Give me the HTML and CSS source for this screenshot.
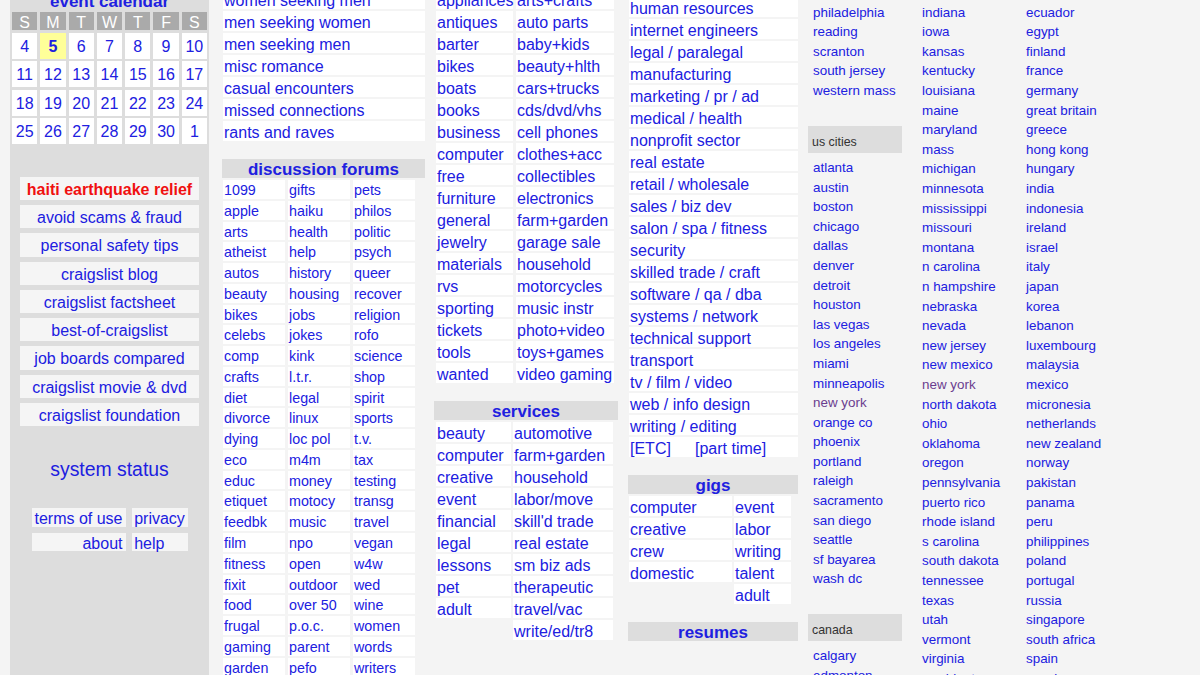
FILE: index.html
```html
<!DOCTYPE html>
<html lang="en">
<head>
<meta charset="utf-8">
<title>craigslist</title>
<link rel="stylesheet" href="styles.css">
</head>
<body>
<div class="page">
  <aside class="sidebar">
    <div class="cal-title"><a href="#">event calendar</a></div>
    <div class="cal-grid">
      <span class="dh">S</span><span class="dh">M</span><span class="dh">T</span><span class="dh">W</span><span class="dh">T</span><span class="dh">F</span><span class="dh">S</span>
      <a class="day" href="#">4</a><a class="day today" href="#">5</a><a class="day" href="#">6</a><a class="day" href="#">7</a><a class="day" href="#">8</a><a class="day" href="#">9</a><a class="day" href="#">10</a>
      <a class="day" href="#">11</a><a class="day" href="#">12</a><a class="day" href="#">13</a><a class="day" href="#">14</a><a class="day" href="#">15</a><a class="day" href="#">16</a><a class="day" href="#">17</a>
      <a class="day" href="#">18</a><a class="day" href="#">19</a><a class="day" href="#">20</a><a class="day" href="#">21</a><a class="day" href="#">22</a><a class="day" href="#">23</a><a class="day" href="#">24</a>
      <a class="day" href="#">25</a><a class="day" href="#">26</a><a class="day" href="#">27</a><a class="day" href="#">28</a><a class="day" href="#">29</a><a class="day" href="#">30</a><a class="day" href="#">1</a>
    </div>
    <ul class="side-links">
      <li><a class="red" href="#">haiti earthquake relief</a></li>
      <li><a href="#">avoid scams &amp; fraud</a></li>
      <li><a href="#">personal safety tips</a></li>
      <li><a href="#">craigslist blog</a></li>
      <li><a href="#">craigslist factsheet</a></li>
      <li><a href="#">best-of-craigslist</a></li>
      <li><a href="#">job boards compared</a></li>
      <li><a href="#">craigslist movie &amp; dvd</a></li>
      <li><a href="#">craigslist foundation</a></li>
    </ul>
    <div class="status"><a href="#">system status</a></div>
    <div class="foot">
      <a class="r" href="#">terms of use</a><a class="l" href="#">privacy</a>
      <a class="r" href="#">about</a><a class="l" href="#">help</a>
    </div>
  </aside>

  <section class="col col-a">
    <ul class="cells cells-a">
      <li><a href="#">women seeking men</a></li>
      <li><a href="#">men seeking women</a></li>
      <li><a href="#">men seeking men</a></li>
      <li><a href="#">misc romance</a></li>
      <li><a href="#">casual encounters</a></li>
      <li><a href="#">missed connections</a></li>
      <li><a href="#">rants and raves</a></li>
    </ul>
    <div class="sec"><a href="#">discussion forums</a></div>
    <div class="forum">
      <ul class="cells fcells">
        <li><a href="#">1099</a></li><li><a href="#">apple</a></li><li><a href="#">arts</a></li><li><a href="#">atheist</a></li><li><a href="#">autos</a></li><li><a href="#">beauty</a></li><li><a href="#">bikes</a></li><li><a href="#">celebs</a></li><li><a href="#">comp</a></li><li><a href="#">crafts</a></li><li><a href="#">diet</a></li><li><a href="#">divorce</a></li><li><a href="#">dying</a></li><li><a href="#">eco</a></li><li><a href="#">educ</a></li><li><a href="#">etiquet</a></li><li><a href="#">feedbk</a></li><li><a href="#">film</a></li><li><a href="#">fitness</a></li><li><a href="#">fixit</a></li><li><a href="#">food</a></li><li><a href="#">frugal</a></li><li><a href="#">gaming</a></li><li><a href="#">garden</a></li>
      </ul>
      <ul class="cells fcells">
        <li><a href="#">gifts</a></li><li><a href="#">haiku</a></li><li><a href="#">health</a></li><li><a href="#">help</a></li><li><a href="#">history</a></li><li><a href="#">housing</a></li><li><a href="#">jobs</a></li><li><a href="#">jokes</a></li><li><a href="#">kink</a></li><li><a href="#">l.t.r.</a></li><li><a href="#">legal</a></li><li><a href="#">linux</a></li><li><a href="#">loc pol</a></li><li><a href="#">m4m</a></li><li><a href="#">money</a></li><li><a href="#">motocy</a></li><li><a href="#">music</a></li><li><a href="#">npo</a></li><li><a href="#">open</a></li><li><a href="#">outdoor</a></li><li><a href="#">over 50</a></li><li><a href="#">p.o.c.</a></li><li><a href="#">parent</a></li><li><a href="#">pefo</a></li>
      </ul>
      <ul class="cells fcells">
        <li><a href="#">pets</a></li><li><a href="#">philos</a></li><li><a href="#">politic</a></li><li><a href="#">psych</a></li><li><a href="#">queer</a></li><li><a href="#">recover</a></li><li><a href="#">religion</a></li><li><a href="#">rofo</a></li><li><a href="#">science</a></li><li><a href="#">shop</a></li><li><a href="#">spirit</a></li><li><a href="#">sports</a></li><li><a href="#">t.v.</a></li><li><a href="#">tax</a></li><li><a href="#">testing</a></li><li><a href="#">transg</a></li><li><a href="#">travel</a></li><li><a href="#">vegan</a></li><li><a href="#">w4w</a></li><li><a href="#">wed</a></li><li><a href="#">wine</a></li><li><a href="#">women</a></li><li><a href="#">words</a></li><li><a href="#">writers</a></li>
      </ul>
    </div>
  </section>

  <section class="col col-b">
    <div class="sale">
      <ul class="cells s1">
        <li><a href="#">appliances</a></li><li><a href="#">antiques</a></li><li><a href="#">barter</a></li><li><a href="#">bikes</a></li><li><a href="#">boats</a></li><li><a href="#">books</a></li><li><a href="#">business</a></li><li><a href="#">computer</a></li><li><a href="#">free</a></li><li><a href="#">furniture</a></li><li><a href="#">general</a></li><li><a href="#">jewelry</a></li><li><a href="#">materials</a></li><li><a href="#">rvs</a></li><li><a href="#">sporting</a></li><li><a href="#">tickets</a></li><li><a href="#">tools</a></li><li><a href="#">wanted</a></li>
      </ul>
      <ul class="cells s2">
        <li><a href="#">arts+crafts</a></li><li><a href="#">auto parts</a></li><li><a href="#">baby+kids</a></li><li><a href="#">beauty+hlth</a></li><li><a href="#">cars+trucks</a></li><li><a href="#">cds/dvd/vhs</a></li><li><a href="#">cell phones</a></li><li><a href="#">clothes+acc</a></li><li><a href="#">collectibles</a></li><li><a href="#">electronics</a></li><li><a href="#">farm+garden</a></li><li><a href="#">garage sale</a></li><li><a href="#">household</a></li><li><a href="#">motorcycles</a></li><li><a href="#">music instr</a></li><li><a href="#">photo+video</a></li><li><a href="#">toys+games</a></li><li><a href="#">video gaming</a></li>
      </ul>
    </div>
    <div class="sec"><a href="#">services</a></div>
    <div class="svc">
      <ul class="cells v1">
        <li><a href="#">beauty</a></li><li><a href="#">computer</a></li><li><a href="#">creative</a></li><li><a href="#">event</a></li><li><a href="#">financial</a></li><li><a href="#">legal</a></li><li><a href="#">lessons</a></li><li><a href="#">pet</a></li><li><a href="#">adult</a></li>
      </ul>
      <ul class="cells v2">
        <li><a href="#">automotive</a></li><li><a href="#">farm+garden</a></li><li><a href="#">household</a></li><li><a href="#">labor/move</a></li><li><a href="#">skill'd trade</a></li><li><a href="#">real estate</a></li><li><a href="#">sm biz ads</a></li><li><a href="#">therapeutic</a></li><li><a href="#">travel/vac</a></li><li><a href="#">write/ed/tr8</a></li>
      </ul>
    </div>
  </section>

  <section class="col col-c">
    <ul class="cells jobs">
      <li><a href="#">human resources</a></li>
      <li><a href="#">internet engineers</a></li>
      <li><a href="#">legal / paralegal</a></li>
      <li><a href="#">manufacturing</a></li>
      <li><a href="#">marketing / pr / ad</a></li>
      <li><a href="#">medical / health</a></li>
      <li><a href="#">nonprofit sector</a></li>
      <li><a href="#">real estate</a></li>
      <li><a href="#">retail / wholesale</a></li>
      <li><a href="#">sales / biz dev</a></li>
      <li><a href="#">salon / spa / fitness</a></li>
      <li><a href="#">security</a></li>
      <li><a href="#">skilled trade / craft</a></li>
      <li><a href="#">software / qa / dba</a></li>
      <li><a href="#">systems / network</a></li>
      <li><a href="#">technical support</a></li>
      <li><a href="#">transport</a></li>
      <li><a href="#">tv / film / video</a></li>
      <li><a href="#">web / info design</a></li>
      <li><a href="#">writing / editing</a></li>
      <li class="etc-row"><a class="etc" href="#">[ETC]</a><a href="#">[part time]</a></li>
    </ul>
    <div class="sec"><a href="#">gigs</a></div>
    <div class="gigs">
      <ul class="cells g1">
        <li><a href="#">computer</a></li><li><a href="#">creative</a></li><li><a href="#">crew</a></li><li><a href="#">domestic</a></li>
      </ul>
      <ul class="cells g2">
        <li><a href="#">event</a></li><li><a href="#">labor</a></li><li><a href="#">writing</a></li><li><a href="#">talent</a></li><li><a href="#">adult</a></li>
      </ul>
    </div>
    <div class="sec"><a href="#">resumes</a></div>
  </section>

  <section class="col col-d">
    <div class="c1">
      <ul class="city">
        <li><a href="#">oneonta</a></li>
        <li><a href="#">philadelphia</a></li>
        <li><a href="#">reading</a></li>
        <li><a href="#">scranton</a></li>
        <li><a href="#">south jersey</a></li>
        <li><a href="#">western mass</a></li>
      </ul>
      <div class="chead">us cities</div>
      <ul class="city">
        <li><a href="#">atlanta</a></li>
        <li><a href="#">austin</a></li>
        <li><a href="#">boston</a></li>
        <li><a href="#">chicago</a></li>
        <li><a href="#">dallas</a></li>
        <li><a href="#">denver</a></li>
        <li><a href="#">detroit</a></li>
        <li><a href="#">houston</a></li>
        <li><a href="#">las vegas</a></li>
        <li><a href="#">los angeles</a></li>
        <li><a href="#">miami</a></li>
        <li><a href="#">minneapolis</a></li>
        <li><a class="v" href="#">new york</a></li>
        <li><a href="#">orange co</a></li>
        <li><a href="#">phoenix</a></li>
        <li><a href="#">portland</a></li>
        <li><a href="#">raleigh</a></li>
        <li><a href="#">sacramento</a></li>
        <li><a href="#">san diego</a></li>
        <li><a href="#">seattle</a></li>
        <li><a href="#">sf bayarea</a></li>
        <li><a href="#">wash dc</a></li>
      </ul>
      <div class="chead">canada</div>
      <ul class="city">
        <li><a href="#">calgary</a></li>
        <li><a href="#">edmonton</a></li>
      </ul>
    </div>
    <div class="c2">
      <ul class="city">
        <li><a href="#">illinois</a></li>
        <li><a href="#">indiana</a></li>
        <li><a href="#">iowa</a></li>
        <li><a href="#">kansas</a></li>
        <li><a href="#">kentucky</a></li>
        <li><a href="#">louisiana</a></li>
        <li><a href="#">maine</a></li>
        <li><a href="#">maryland</a></li>
        <li><a href="#">mass</a></li>
        <li><a href="#">michigan</a></li>
        <li><a href="#">minnesota</a></li>
        <li><a href="#">mississippi</a></li>
        <li><a href="#">missouri</a></li>
        <li><a href="#">montana</a></li>
        <li><a href="#">n carolina</a></li>
        <li><a href="#">n hampshire</a></li>
        <li><a href="#">nebraska</a></li>
        <li><a href="#">nevada</a></li>
        <li><a href="#">new jersey</a></li>
        <li><a href="#">new mexico</a></li>
        <li><a class="v" href="#">new york</a></li>
        <li><a href="#">north dakota</a></li>
        <li><a href="#">ohio</a></li>
        <li><a href="#">oklahoma</a></li>
        <li><a href="#">oregon</a></li>
        <li><a href="#">pennsylvania</a></li>
        <li><a href="#">puerto rico</a></li>
        <li><a href="#">rhode island</a></li>
        <li><a href="#">s carolina</a></li>
        <li><a href="#">south dakota</a></li>
        <li><a href="#">tennessee</a></li>
        <li><a href="#">texas</a></li>
        <li><a href="#">utah</a></li>
        <li><a href="#">vermont</a></li>
        <li><a href="#">virginia</a></li>
        <li><a href="#">washington</a></li>
      </ul>
    </div>
    <div class="c3">
      <ul class="city">
        <li><a href="#">dominican</a></li>
        <li><a href="#">ecuador</a></li>
        <li><a href="#">egypt</a></li>
        <li><a href="#">finland</a></li>
        <li><a href="#">france</a></li>
        <li><a href="#">germany</a></li>
        <li><a href="#">great britain</a></li>
        <li><a href="#">greece</a></li>
        <li><a href="#">hong kong</a></li>
        <li><a href="#">hungary</a></li>
        <li><a href="#">india</a></li>
        <li><a href="#">indonesia</a></li>
        <li><a href="#">ireland</a></li>
        <li><a href="#">israel</a></li>
        <li><a href="#">italy</a></li>
        <li><a href="#">japan</a></li>
        <li><a href="#">korea</a></li>
        <li><a href="#">lebanon</a></li>
        <li><a href="#">luxembourg</a></li>
        <li><a href="#">malaysia</a></li>
        <li><a href="#">mexico</a></li>
        <li><a href="#">micronesia</a></li>
        <li><a href="#">netherlands</a></li>
        <li><a href="#">new zealand</a></li>
        <li><a href="#">norway</a></li>
        <li><a href="#">pakistan</a></li>
        <li><a href="#">panama</a></li>
        <li><a href="#">peru</a></li>
        <li><a href="#">philippines</a></li>
        <li><a href="#">poland</a></li>
        <li><a href="#">portugal</a></li>
        <li><a href="#">russia</a></li>
        <li><a href="#">singapore</a></li>
        <li><a href="#">south africa</a></li>
        <li><a href="#">spain</a></li>
        <li><a href="#">sweden</a></li>
      </ul>
    </div>
  </section>
</div>
</body>
</html>
```

FILE: styles.css
```css
html, body {
  margin: 0;
  padding: 0;
}
body {
  background: #f4f4f4;
  font-family: "Liberation Sans", Arial, Helvetica, sans-serif;
  height: 675px;
  overflow: hidden;
}
a {
  color: #2020e0;
  text-decoration: none;
}
a.v {
  color: #6b3d8f;
}
a.red {
  color: #f01010;
  font-weight: bold;
}
ul {
  list-style: none;
  margin: 0;
  padding: 0;
}

.page {
  display: flex;
  align-items: flex-start;
  padding-left: 10px;
}

/* ---------- sidebar ---------- */
.sidebar {
  flex: none;
  width: 199px;
  min-height: 700px;
  background: #dddddd;
}
.cal-title {
  margin-top: -8.4px;
  height: 19px;
  line-height: 19px;
  text-align: center;
  font-size: 17px;
  font-weight: bold;
}
.cal-grid {
  display: grid;
  grid-template-columns: repeat(7, 1fr);
  grid-template-rows: 18px repeat(4, 26px);
  column-gap: 3px;
  row-gap: 2.5px;
  margin: 1.4px 2px 0;
}
.dh {
  background: #aaaaaa;
  color: #ffffff;
  font-size: 16px;
  line-height: 21px;
  height: 18px;
  overflow: hidden;
  text-align: center;
}
.day {
  background: #ffffff;
  font-size: 16px;
  line-height: 28px;
  height: 26px;
  text-align: center;
}
.day.today {
  background: #ffff99;
  font-weight: bold;
}
.side-links {
  display: flex;
  flex-direction: column;
  gap: 5px;
  margin: 32.7px 10px 0;
}
.side-links li {
  height: 23.3px;
  line-height: 26px;
  background: #f5f5f5;
  text-align: center;
  font-size: 16px;
  white-space: nowrap;
}
.status {
  margin-top: 32px;
  text-align: center;
  font-size: 19.4px;
  line-height: 22px;
}
.foot {
  display: grid;
  grid-template-columns: 94px 56px;
  grid-template-rows: 19px 18px;
  column-gap: 6px;
  row-gap: 6px;
  justify-content: center;
  margin-top: 27.4px;
}
.foot a {
  background: #f5f5f5;
  font-size: 16px;
  line-height: 21px;
  white-space: nowrap;
}
.foot a.r {
  text-align: right;
  padding-right: 3px;
}
.foot a.l {
  padding-left: 2.7px;
}

/* ---------- main columns ---------- */
.col {
  flex: none;
}
.cells {
  display: flex;
  flex-direction: column;
  gap: 2px;
}
.cells li {
  height: 20px;
  line-height: 24px;
  background: #ffffff;
  padding-left: 1px;
  font-size: 16px;
  white-space: nowrap;
}
.sec {
  margin-top: 18px;
  margin-bottom: 2px;
  height: 19px;
  line-height: 22px;
  background: #dddddd;
  text-align: center;
  font-size: 17px;
  font-weight: bold;
}

.col-a {
  width: 203px;
  margin-left: 13px;
  margin-top: -11px;
}
.cells-a {
  margin-left: 1px;
}
.forum {
  display: flex;
  gap: 3px;
  margin-left: 1px;
}
.fcells {
  width: 62px;
}
.fcells li {
  height: 18.78px;
  line-height: 20.8px;
  font-size: 14.3px;
}

.col-b {
  width: 184px;
  margin-left: 9px;
  margin-top: -11px;
}
.sale {
  display: flex;
  gap: 3px;
  margin-left: 2px;
}
.s1 { width: 77px; }
.s2 { width: 98px; }
.svc {
  display: flex;
  gap: 2px;
  margin-left: 2px;
}
.v1 { width: 75px; }
.v2 { width: 100px; }

.col-c {
  width: 170px;
  margin-left: 10px;
  margin-top: -3px;
}
.jobs {
  margin-left: 1px;
}
.etc-row {
  display: flex;
}
.etc {
  width: 65px;
}
.gigs {
  display: flex;
  gap: 2px;
  margin-left: 1px;
}
.g1 { width: 103px; }
.g2 { width: 57px; }

/* ---------- cities ---------- */
.col-d {
  display: flex;
  align-items: flex-start;
  margin-left: 10px;
  margin-top: -16.9px;
}
.c1 { width: 94px; }
.c2 { width: 104px; margin-left: 20px; }
.c3 { width: 150px; }
.city li {
  font-size: 13.4px;
  line-height: 19.6px;
  white-space: nowrap;
}
.c1 .city li {
  padding-left: 5px;
}
.chead {
  margin-top: 25.3px;
  margin-bottom: 5px;
  height: 27px;
  line-height: 32px;
  overflow: hidden;
  background: #dddddd;
  color: #333333;
  font-size: 12.4px;
  padding-left: 4px;
}
```
